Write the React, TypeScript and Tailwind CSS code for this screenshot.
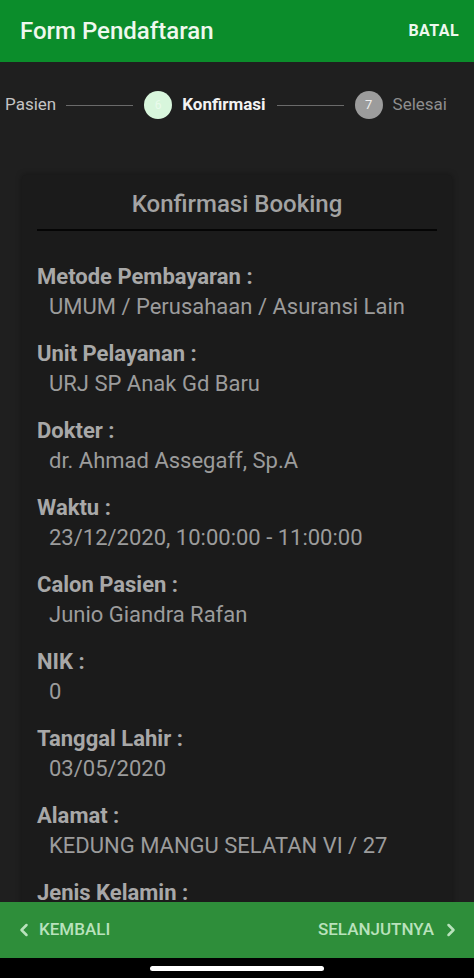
import { ChevronLeft, ChevronRight } from 'lucide-react';

const items = [
  { label: 'Metode Pembayaran :', value: 'UMUM / Perusahaan / Asuransi Lain' },
  { label: 'Unit Pelayanan :', value: 'URJ SP Anak Gd Baru' },
  { label: 'Dokter :', value: 'dr. Ahmad Assegaff, Sp.A' },
  { label: 'Waktu :', value: '23/12/2020, 10:00:00 - 11:00:00' },
  { label: 'Calon Pasien :', value: 'Junio Giandra Rafan' },
  { label: 'NIK :', value: '0' },
  { label: 'Tanggal Lahir :', value: '03/05/2020' },
  { label: 'Alamat :', value: 'KEDUNG MANGU SELATAN VI / 27' },
  { label: 'Jenis Kelamin :', value: 'Laki-laki' },
];

export default function App() {
  return (
    <div
      className="flex h-[978px] w-[474px] flex-col overflow-hidden bg-[#1f1f1f]"
      style={{ fontFamily: 'Roboto, "Noto Sans", sans-serif' }}
    >
      {/* header */}
      <div className="flex h-[62px] shrink-0 items-center justify-between bg-[#0b8d2b] pl-5 pr-[15px]">
        <h1 className="text-[24px] font-medium text-[#eef8ee]">Form Pendaftaran</h1>
        <button className="text-[16px] font-bold tracking-wide text-[#eef8ee]">BATAL</button>
      </div>

      {/* stepper */}
      <div className="flex h-[86px] shrink-0 items-center whitespace-nowrap pl-[5px] text-[17px]">
        <span className="text-[#c4c4c4]">Pasien</span>
        <div className="ml-[10px] h-px w-[67px] shrink-0 bg-[#6a6a6a]" />
        <div className="ml-[11px] flex h-[28px] w-[28px] shrink-0 items-center justify-center rounded-full bg-[#d8f6dc] text-[12px] text-[#eafbec]">
          6
        </div>
        <span className="ml-[10px] font-bold text-[#f2f2f2]">Konfirmasi</span>
        <div className="ml-[11px] h-px w-[67px] shrink-0 bg-[#6a6a6a]" />
        <div className="ml-[11px] flex h-[28px] w-[28px] shrink-0 items-center justify-center rounded-full bg-[#9c9c9c] text-[13px] text-[#eeeeee]">
          7
        </div>
        <span className="ml-[10px] text-[#8e8e8e]">Selesai</span>
      </div>

      {/* content */}
      <div className="min-h-0 flex-1 overflow-hidden px-[22px] pt-[27px]">
        <div className="rounded-sm bg-[#1b1b1b] px-[15px] shadow-[0_0_6px_rgba(0,0,0,0.35)]">
          <div className="flex h-[56px] items-center justify-center border-b-2 border-[#050505] pt-[4px]">
            <h2 className="text-[24px] font-medium text-[#a3a3a3]">Konfirmasi Booking</h2>
          </div>
          <div className="flex flex-col gap-[17px] pt-[31px] pb-6">
            {items.map((it) => (
              <div key={it.label} className="flex flex-col whitespace-nowrap">
                <span className="text-[22px] font-bold leading-[30px] text-[#a8a8a8]">{it.label}</span>
                <span className="pl-3 text-[22px] leading-[30px] text-[#9c9c9c]">{it.value}</span>
              </div>
            ))}
          </div>
        </div>
      </div>

      {/* bottom nav */}
      <div className="flex h-[56px] shrink-0 items-center justify-between pl-[14px] pr-[13px] bg-[#2e8e3a] text-[17px] font-medium text-[#b9e2bc]">
        <button className="flex items-center gap-[5px]">
          <ChevronLeft size={20} strokeWidth={3} />
          <span>KEMBALI</span>
        </button>
        <button className="flex items-center gap-[7px]">
          <span>SELANJUTNYA</span>
          <ChevronRight size={20} strokeWidth={3} />
        </button>
      </div>

      {/* home indicator */}
      <div className="flex h-[20px] shrink-0 items-center justify-center bg-black">
        <div className="h-[5px] w-[174px] rounded-full bg-white" />
      </div>
    </div>
  );
}
